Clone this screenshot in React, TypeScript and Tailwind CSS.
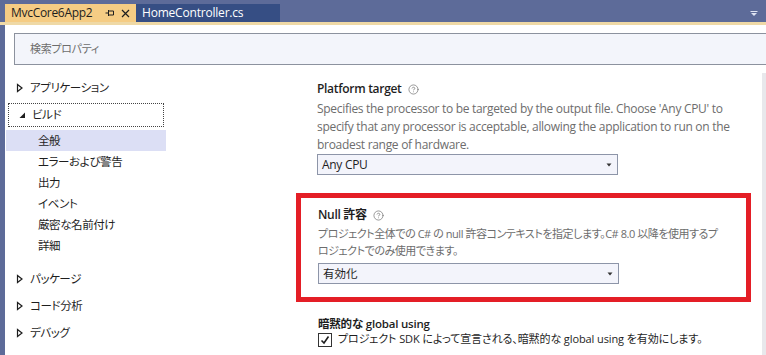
import { CircleHelp } from 'lucide-react'

const font = "font-['Open_Sans','Noto_Sans_CJK_JP',sans-serif] [font-feature-settings:'palt']"

function Collapsed() {
  return (
    <svg width="8" height="10" viewBox="0 0 8 10" className="shrink-0">
      <path d="M1.5 1.5 L6 5 L1.5 8.5 Z" fill="none" stroke="#1e1e1e" strokeWidth="1.2" />
    </svg>
  )
}

function Expanded() {
  return (
    <svg width="8" height="10" viewBox="0 0 8 10" className="shrink-0">
      <path d="M7 2.5 L7 8 L1.5 8 Z" fill="#1e1e1e" />
    </svg>
  )
}

function Caret() {
  return (
    <svg width="6" height="4" viewBox="0 0 6 4">
      <path d="M0.5 0.5 L5.5 0.5 L3 3.5 Z" fill="#333" />
    </svg>
  )
}

function Select({ value, jp }: { value: string; jp?: boolean }) {
  return (
    <div
      className={`w-[301px] h-[21px] border border-[#8d95a8] bg-[#f3f4fb] flex items-center pl-[4px] pr-[5px] text-[#1e1e1e] ${
        jp ? 'text-[11.5px]' : 'text-[12px] tracking-[-0.3px]'
      }`}
    >
      <span className="flex-1">{value}</span>
      <Caret />
    </div>
  )
}

function Title({ children }: { children: React.ReactNode }) {
  return (
    <div className="flex items-center gap-[6px] h-[18px] text-[12px] tracking-[-0.3px] font-semibold text-[#1e1e1e]">
      <span>{children}</span>
      <CircleHelp size={11} strokeWidth={1.5} color="#6d6d6d" />
    </div>
  )
}

const subItems = ['全般', 'エラーおよび警告', '出力', 'イベント', '厳密な名前付け', '詳細']

export default function App() {
  return (
    <div className={`w-[766px] h-[355px] bg-[#5d6b99] flex flex-col overflow-hidden ${font}`}>
      {/* tab bar */}
      <div className="h-[22px] flex items-end pl-[5px] pr-[8px] shrink-0">
        <div className="h-[18px] w-[131px] bg-[#f5cc84] flex items-center pl-[6px] text-[12px] tracking-[-0.3px] text-[#1e1e1e]">
          <span className="flex-1">MvcCore6App2</span>
          <svg width="10" height="8" viewBox="0 0 10 8" className="mr-[6px]">
            <path d="M0.5 4 H3.5 M3.5 1 V7 M3.5 2 H8.5 V6 H3.5" fill="none" stroke="#1e1e1e" strokeWidth="1" />
          </svg>
          <svg width="9" height="9" viewBox="0 0 9 9" className="mr-[6px]">
            <path d="M1 1 L8 8 M8 1 L1 8" stroke="#1e1e1e" strokeWidth="1.2" />
          </svg>
        </div>
        <div className="h-[18px] w-[144px] bg-[#364e84] flex items-center pl-[6px] text-[12px] tracking-[-0.2px] text-white">
          HomeController.cs
        </div>
        <div className="flex-1" />
        <svg width="8" height="6" viewBox="0 0 8 6" className="mb-[5px]">
          <path d="M0.5 0.5 H7.5" stroke="#dfe4f2" strokeWidth="1" />
          <path d="M1 2 H7 L4 5 Z" fill="#dfe4f2" />
        </svg>
      </div>
      <div className="h-[3px] bg-[#efd9a6] shrink-0" />

      <div className="flex-1 ml-[5px] bg-white flex flex-col min-h-0">
        {/* search */}
        <div className="pt-[8px] pl-[9px] shrink-0">
          <div className="h-[32px] border-y border-l border-[#8c929e] bg-[#f3f5fb] flex items-center pl-[15px] text-[11px] tracking-[-0.3px] text-[#6d6d6d]">
            検索プロパティ
          </div>
        </div>

        <div className="flex flex-1 min-h-0">
          {/* nav */}
          <div className="w-[161px] pt-[11px] pl-[1px] text-[11.5px] tracking-[-0.4px] text-[#1e1e1e] shrink-0">
            <div className="h-[24px] flex items-center pl-[10px] gap-[6px]">
              <Collapsed />
              <span>アプリケーション</span>
            </div>
            <div className="mt-[3px] h-[24px] flex items-center pl-[9px] gap-[6px] border border-dotted border-[#444] ml-[2px] mr-[2px]">
              <Expanded />
              <span>ビルド</span>
            </div>
            <div className="mt-[3px] flex flex-col">
              {subItems.map((s, i) => (
                <div
                  key={s}
                  className={`h-[21px] flex items-center pl-[32px] ${i === 0 ? 'bg-[#dcdff5]' : ''}`}
                >
                  {s}
                </div>
              ))}
            </div>
            <div className="mt-[11px] h-[24px] flex items-center pl-[10px] gap-[6px]">
              <Collapsed />
              <span>パッケージ</span>
            </div>
            <div className="mt-[3px] h-[24px] flex items-center pl-[10px] gap-[6px]">
              <Collapsed />
              <span>コード分析</span>
            </div>
            <div className="mt-[3px] h-[24px] flex items-center pl-[10px] gap-[6px]">
              <Collapsed />
              <span>デバッグ</span>
            </div>
          </div>

          {/* content */}
          <div className="ml-[130px] w-[455px] pt-[15px] shrink-0">
            <div className="pl-[21px]">
              <Title>Platform target</Title>
              <div className="mt-[2px] text-[12px] tracking-[-0.3px] leading-[18px] text-[#6d6d6d] whitespace-nowrap">
                <div>Specifies the processor to be targeted by the output file. Choose 'Any CPU' to</div>
                <div>specify that any processor is acceptable, allowing the application to run on the</div>
                <div>broadest range of hardware.</div>
              </div>
              <Select value="Any CPU" />
            </div>

            <div className="mt-[18px] border-[5px] border-[#e41e26] pl-[17px] pt-[8px] pb-[13px]">
              <Title>Null 許容</Title>
              <div className="mt-[1px] text-[11px] tracking-[-0.45px] leading-[17px] text-[#6d6d6d] whitespace-nowrap">
                <div>プロジェクト全体での C# の null 許容コンテキストを指定します。C# 8.0 以降を使用するプ</div>
                <div>ロジェクトでのみ使用できます。</div>
              </div>
              <div className="mt-[4px]">
                <Select value="有効化" jp />
              </div>
            </div>

            <div className="pl-[22px] mt-[14px] whitespace-nowrap">
              <div className="h-[16px] flex items-center text-[11.5px] font-semibold tracking-[-0.2px] text-[#1e1e1e]">
                暗黙的な global using
              </div>
              <div className="h-[15px] flex items-center gap-[6px] text-[11px] tracking-[-0.1px] text-[#1e1e1e]">
                <div className="w-[14px] h-[14px] border border-[#333] bg-white flex items-center justify-center shrink-0">
                  <svg width="10" height="10" viewBox="0 0 10 10">
                    <path d="M1.5 5.5 L4 8 L8.5 1.5" fill="none" stroke="#1e1e1e" strokeWidth="1.6" />
                  </svg>
                </div>
                <span>プロジェクト SDK によって宣言される、暗黙的な global using を有効にします。</span>
              </div>
            </div>
          </div>

          <div className="flex-1" />
          <div className="w-[4px] mt-[8px] bg-[#e8e8ec] shrink-0" />
        </div>
      </div>
    </div>
  )
}
